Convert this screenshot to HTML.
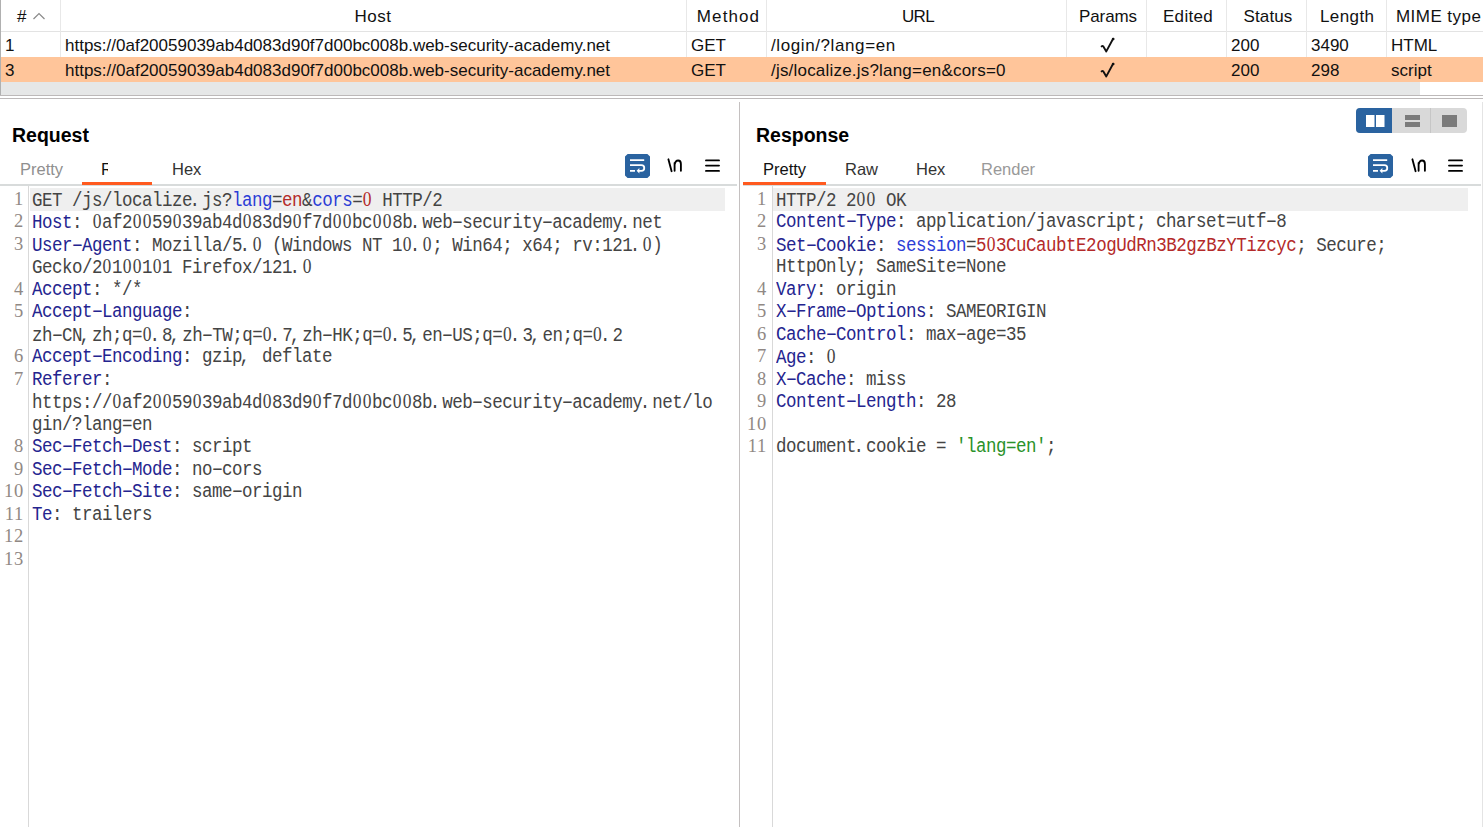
<!DOCTYPE html>
<html><head><meta charset="utf-8">
<style>
*{margin:0;padding:0;box-sizing:border-box}
html,body{width:1483px;height:827px;overflow:hidden;background:#fff}
body{position:relative;font-family:"Liberation Sans",sans-serif;color:#000}
.a{position:absolute;white-space:pre}
.hl{position:absolute;background:#e8e8e8}
.vl{position:absolute;background:#e8e8e8;width:1px}
.th{position:absolute;top:1px;height:31px;line-height:31px;font-size:17px;text-align:center;color:#111}
.td{position:absolute;height:25px;line-height:25px;font-size:17px;color:#111;white-space:pre}
.title{position:absolute;top:122.8px;line-height:24px;font-size:19.5px;font-weight:bold;color:#000}
.tab{position:absolute;top:159px;line-height:20px;font-size:16.5px;white-space:pre}
.cb{position:absolute;top:189px;width:700px;height:400px;font-family:"Liberation Mono",monospace;font-size:17.5px;letter-spacing:-0.5px;color:#444}
.z{font-family:"Liberation Serif",serif;letter-spacing:0.65px;padding-left:0.6px}
.pt{position:relative;left:-2.5px}
.hy{display:inline-block;transform:scaleX(1.75)}
.cl{position:absolute;left:0;white-space:pre;line-height:19.737px;transform:scaleY(1.14);transform-origin:0 0}
.ln{position:absolute;top:187.5px;font-family:"Liberation Serif",serif;font-size:18.5px;letter-spacing:0.75px;line-height:22.5px;white-space:pre;color:#908884;text-align:right}
.k{color:#24248f}
.b{color:#2b3dd6}
.r{color:#b42a2a}
.g{color:#2a922a}
</style></head><body>

<!-- ===== TABLE ===== -->
<div class="a" style="left:0;top:0;width:1px;height:96px;background:#b0b0b0"></div>
<!-- header bottom line -->
<div class="hl" style="left:1px;top:31px;width:1482px;height:1px;background:#e3e3e3"></div>
<!-- column separators header + row1 -->
<div class="vl" style="left:60px;top:0;height:57px"></div>
<div class="vl" style="left:686px;top:0;height:57px"></div>
<div class="vl" style="left:766px;top:0;height:57px"></div>
<div class="vl" style="left:1066px;top:0;height:57px"></div>
<div class="vl" style="left:1146px;top:0;height:57px"></div>
<div class="vl" style="left:1226px;top:0;height:57px"></div>
<div class="vl" style="left:1306px;top:0;height:57px"></div>
<div class="vl" style="left:1386px;top:0;height:57px"></div>

<div class="th" style="left:17px;text-align:left">#</div>
<div class="th" style="left:60px;width:626px;letter-spacing:0.5px">Host</div>
<div class="th" style="left:688px;width:80px;letter-spacing:1.1px;text-indent:1px">Method</div>
<div class="th" style="left:768px;width:300px;letter-spacing:-0.6px">URL</div>
<div class="th" style="left:1068px;width:80px;letter-spacing:-0.1px">Params</div>
<div class="th" style="left:1148px;width:80px;letter-spacing:0.3px">Edited</div>
<div class="th" style="left:1228px;width:80px;letter-spacing:0.1px">Status</div>
<div class="th" style="left:1307px;width:80px;letter-spacing:0.4px;text-indent:0.4px">Length</div>
<div class="th" style="left:1396px;text-align:left;letter-spacing:0.45px">MIME type</div>

<!-- row 2 orange -->
<div class="a" style="left:1px;top:57px;width:1482px;height:25px;background:#ffc59a"></div>
<!-- scrollbar -->
<div class="a" style="left:1px;top:82px;width:1419px;height:13px;background:#e6e7e7"></div>
<div class="a" style="left:0;top:95px;width:1483px;height:1px;background:#bdb9b9"></div>
<div class="a" style="left:0;top:98px;width:1483px;height:1px;background:#bdb9b9"></div>

<div class="td" style="left:5px;top:33px">1</div>
<div class="td" style="left:65px;top:33px">https://0af20059039ab4d083d90f7d00bc008b.web-security-academy.net</div>
<div class="td" style="left:691px;top:33px">GET</div>
<div class="td" style="left:771px;top:33px;letter-spacing:0.6px">/login/?lang=en</div>
<div class="td" style="left:1231px;top:33px">200</div>
<div class="td" style="left:1311px;top:33px">3490</div>
<div class="td" style="left:1391px;top:33px">HTML</div>

<div class="td" style="left:5px;top:58px">3</div>
<div class="td" style="left:65px;top:58px">https://0af20059039ab4d083d90f7d00bc008b.web-security-academy.net</div>
<div class="td" style="left:691px;top:58px">GET</div>
<div class="td" style="left:771px;top:58px;letter-spacing:0.2px">/js/localize.js?lang=en&amp;cors=0</div>
<div class="td" style="left:1231px;top:58px">200</div>
<div class="td" style="left:1311px;top:58px">298</div>
<div class="td" style="left:1391px;top:58px">script</div>


<!-- sort caret -->
<svg class="a" style="left:32px;top:11px" width="14" height="10" viewBox="0 0 14 10">
<path d="M1.5 8L7 2.5L12.5 8" stroke="#8a8a8a" stroke-width="1.2" fill="none"/>
</svg>
<!-- checkmarks -->
<svg class="a" style="left:1099px;top:36px" width="18" height="18" viewBox="0 0 18 18">
<path d="M2.6 10.4Q3.4 9.6 4.2 10.2L7.3 15.4L14.1 2.8" stroke="#111" stroke-width="1.9" fill="none" stroke-linecap="round" stroke-linejoin="round"/><circle cx="14.2" cy="3" r="1.35" fill="#111"/>
</svg>
<svg class="a" style="left:1099px;top:61px" width="18" height="18" viewBox="0 0 18 18">
<path d="M2.6 10.4Q3.4 9.6 4.2 10.2L7.3 15.4L14.1 2.8" stroke="#111" stroke-width="1.9" fill="none" stroke-linecap="round" stroke-linejoin="round"/><circle cx="14.2" cy="3" r="1.35" fill="#111"/>
</svg>
<!-- splitter -->
<div class="a" style="left:739px;top:102px;width:1px;height:725px;background:#c4c0c0"></div>
<div class="a" style="left:1482px;top:102px;width:1px;height:725px;background:#e4e4e4"></div>

<!-- ===== REQUEST ===== -->
<div class="title" style="left:12px">Request</div>
<div class="tab" style="left:20px;color:#8f8f8f">Pretty</div>
<div class="tab" style="left:101px;color:#111;width:7px;overflow:hidden">Raw</div>
<div class="tab" style="left:172px;color:#333">Hex</div>
<div class="a" style="left:0;top:184px;width:737px;height:2px;background:#d8dbdb"></div>
<div class="a" style="left:82px;top:182px;width:70px;height:3px;background:#ff5a1f"></div>


<!-- request toolbar icons -->
<svg class="a" style="left:625px;top:154px" width="25" height="24" viewBox="0 0 25 24">
<path d="M2.6 0H22.4L25 2.6V21.4L22.4 24H2.6L0 21.4V2.6Z" fill="#2a63a0"/>
<path d="M5 6.1H19.2M5 11.1H16.4A2.85 2.85 0 0 1 16.4 16.8H13.4M5 16.8H10" stroke="#fff" stroke-width="1.8" fill="none"/>
<path d="M11.6 16.8L14.4 14.1V19.5Z" fill="#fff"/>
</svg>
<svg class="a" style="left:665px;top:155px" width="20" height="20" viewBox="0 0 20 20">
<path d="M3.4 4.3L6.6 16.2M9.6 15.8V8M9.6 9.6Q10.4 5.5 13.1 5.5Q15.9 5.5 15.9 9V15.8" stroke="#000" stroke-width="1.85" fill="none" stroke-linecap="round"/>
</svg>
<svg class="a" style="left:705px;top:158px" width="15" height="15" viewBox="0 0 15 15">
<path d="M1 2.4H14M1 7.6H14M1 12.9H14" stroke="#000" stroke-width="1.9" stroke-linecap="round"/>
</svg>
<div class="a" style="left:28px;top:186px;width:1px;height:641px;background:#d9d9d9"></div>
<div class="a" style="left:30px;top:188px;width:695px;height:23px;background:#efefef"></div>

<div class="ln" style="left:0;width:24px">1
2
3

4
5

6
7


8
9
10
11
12
13</div>
<div class="cb" style="left:32px">
<div class="cl" style="top:0px">GET /js/localize<span class="pt">.</span>js?<span class="b">lang</span>=<span class="r">en</span>&amp;<span class="b">cors</span>=<span class="r"><span class="z">0</span></span> HTTP/2</div>
<div class="cl" style="top:22px"><span class="k">Host</span>: <span class="z">0</span>af2<span class="z">0</span><span class="z">0</span>59<span class="z">0</span>39ab4d<span class="z">0</span>83d9<span class="z">0</span>f7d<span class="z">0</span><span class="z">0</span>bc<span class="z">0</span><span class="z">0</span>8b<span class="pt">.</span>web<span class="hy">-</span>security<span class="hy">-</span>academy<span class="pt">.</span>net</div>
<div class="cl" style="top:45px"><span class="k">User<span class="hy">-</span>Agent</span>: Mozilla/5<span class="pt">.</span><span class="z">0</span> (Windows NT 1<span class="z">0</span><span class="pt">.</span><span class="z">0</span>; Win64; x64; rv:121<span class="pt">.</span><span class="z">0</span>)</div>
<div class="cl" style="top:67px">Gecko/2<span class="z">0</span>1<span class="z">0</span><span class="z">0</span>1<span class="z">0</span>1 Firefox/121<span class="pt">.</span><span class="z">0</span></div>
<div class="cl" style="top:90px"><span class="k">Accept</span>: */*</div>
<div class="cl" style="top:112px"><span class="k">Accept<span class="hy">-</span>Language</span>:</div>
<div class="cl" style="top:135px">zh<span class="hy">-</span>CN<span class="pt">,</span>zh;q=<span class="z">0</span><span class="pt">.</span>8<span class="pt">,</span>zh<span class="hy">-</span>TW;q=<span class="z">0</span><span class="pt">.</span>7<span class="pt">,</span>zh<span class="hy">-</span>HK;q=<span class="z">0</span><span class="pt">.</span>5<span class="pt">,</span>en<span class="hy">-</span>US;q=<span class="z">0</span><span class="pt">.</span>3<span class="pt">,</span>en;q=<span class="z">0</span><span class="pt">.</span>2</div>
<div class="cl" style="top:157px"><span class="k">Accept<span class="hy">-</span>Encoding</span>: gzip<span class="pt">,</span> deflate</div>
<div class="cl" style="top:180px"><span class="k">Referer</span>:</div>
<div class="cl" style="top:202px">https://<span class="z">0</span>af2<span class="z">0</span><span class="z">0</span>59<span class="z">0</span>39ab4d<span class="z">0</span>83d9<span class="z">0</span>f7d<span class="z">0</span><span class="z">0</span>bc<span class="z">0</span><span class="z">0</span>8b<span class="pt">.</span>web<span class="hy">-</span>security<span class="hy">-</span>academy<span class="pt">.</span>net/lo</div>
<div class="cl" style="top:225px">gin/?lang=en</div>
<div class="cl" style="top:247px"><span class="k">Sec<span class="hy">-</span>Fetch<span class="hy">-</span>Dest</span>: script</div>
<div class="cl" style="top:270px"><span class="k">Sec<span class="hy">-</span>Fetch<span class="hy">-</span>Mode</span>: no<span class="hy">-</span>cors</div>
<div class="cl" style="top:292px"><span class="k">Sec<span class="hy">-</span>Fetch<span class="hy">-</span>Site</span>: same<span class="hy">-</span>origin</div>
<div class="cl" style="top:315px"><span class="k">Te</span>: trailers</div>
</div>

<!-- ===== RESPONSE ===== -->
<div class="title" style="left:756px">Response</div>
<div class="tab" style="left:763px;color:#111">Pretty</div>
<div class="tab" style="left:845px;color:#333">Raw</div>
<div class="tab" style="left:916px;color:#333">Hex</div>
<div class="tab" style="left:981px;color:#999">Render</div>
<div class="a" style="left:743px;top:184px;width:738px;height:2px;background:#d8dbdb"></div>
<div class="a" style="left:743px;top:182px;width:83px;height:3px;background:#ff5a1f"></div>


<!-- response toolbar icons -->
<svg class="a" style="left:1368px;top:154px" width="25" height="24" viewBox="0 0 25 24">
<path d="M2.6 0H22.4L25 2.6V21.4L22.4 24H2.6L0 21.4V2.6Z" fill="#2a63a0"/>
<path d="M5 6.1H19.2M5 11.1H16.4A2.85 2.85 0 0 1 16.4 16.8H13.4M5 16.8H10" stroke="#fff" stroke-width="1.8" fill="none"/>
<path d="M11.6 16.8L14.4 14.1V19.5Z" fill="#fff"/>
</svg>
<svg class="a" style="left:1409px;top:155px" width="20" height="20" viewBox="0 0 20 20">
<path d="M3.4 4.3L6.6 16.2M9.6 15.8V8M9.6 9.6Q10.4 5.5 13.1 5.5Q15.9 5.5 15.9 9V15.8" stroke="#000" stroke-width="1.85" fill="none" stroke-linecap="round"/>
</svg>
<svg class="a" style="left:1448px;top:158px" width="15" height="15" viewBox="0 0 15 15">
<path d="M1 2.4H14M1 7.6H14M1 12.9H14" stroke="#000" stroke-width="1.9" stroke-linecap="round"/>
</svg>
<!-- layout toggle -->
<svg class="a" style="left:1356px;top:108px" width="112" height="25" viewBox="0 0 112 25">
<rect x="0" y="0" width="111" height="25" rx="4" fill="#d9d9d9"/>
<path d="M4 0H36V25H4A4 4 0 0 1 0 21V4A4 4 0 0 1 4 0Z" fill="#2a63a0"/>
<rect x="74" y="0" width="1" height="25" fill="#c6c6c6"/>
<rect x="10" y="7" width="8.5" height="12" fill="#fff"/>
<rect x="20" y="7" width="8.5" height="12" fill="#fff"/>
<rect x="49" y="7" width="15" height="5" fill="#7b7b7b"/>
<rect x="49" y="14" width="15" height="5" fill="#7b7b7b"/>
<rect x="86" y="7" width="15" height="12" fill="#7b7b7b"/>
</svg>
<div class="a" style="left:772px;top:186px;width:1px;height:641px;background:#d9d9d9"></div>
<div class="a" style="left:773px;top:188px;width:695px;height:23px;background:#efefef"></div>

<div class="ln" style="left:743px;width:24px">1
2
3

4
5
6
7
8
9
10
11</div>
<div class="cb" style="left:776px">
<div class="cl" style="top:0px">HTTP/2 2<span class="z">0</span><span class="z">0</span> OK</div>
<div class="cl" style="top:22px"><span class="k">Content<span class="hy">-</span>Type</span>: application/javascript; charset=utf<span class="hy">-</span>8</div>
<div class="cl" style="top:45px"><span class="k">Set<span class="hy">-</span>Cookie</span>: <span class="b">session</span>=<span class="r">5<span class="z">0</span>3CuCaubtE2ogUdRn3B2gzBzYTizcyc</span>; Secure;</div>
<div class="cl" style="top:67px">HttpOnly; SameSite=None</div>
<div class="cl" style="top:90px"><span class="k">Vary</span>: origin</div>
<div class="cl" style="top:112px"><span class="k">X<span class="hy">-</span>Frame<span class="hy">-</span>Options</span>: SAMEORIGIN</div>
<div class="cl" style="top:135px"><span class="k">Cache<span class="hy">-</span>Control</span>: max<span class="hy">-</span>age=35</div>
<div class="cl" style="top:157px"><span class="k">Age</span>: <span class="z">0</span></div>
<div class="cl" style="top:180px"><span class="k">X<span class="hy">-</span>Cache</span>: miss</div>
<div class="cl" style="top:202px"><span class="k">Content<span class="hy">-</span>Length</span>: 28</div>
<div class="cl" style="top:225px"></div>
<div class="cl" style="top:247px">document<span class="pt">.</span>cookie = <span class="g">'lang=en'</span>;</div>
</div>

</body></html>
